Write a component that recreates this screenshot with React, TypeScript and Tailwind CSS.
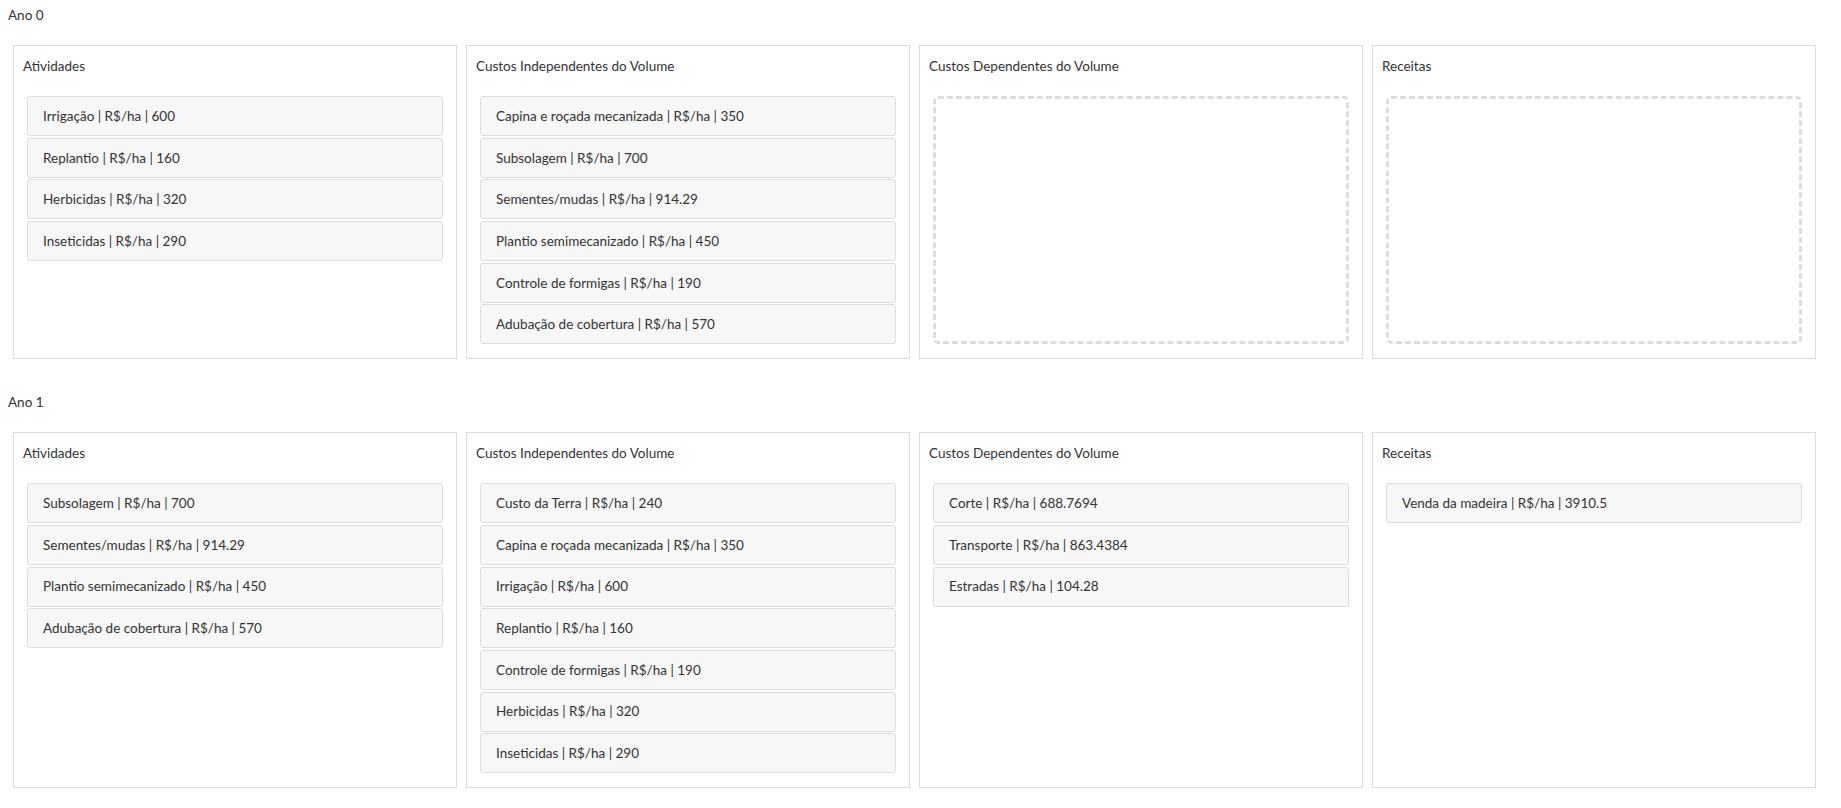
import React from 'react'

type Column = { title: string; items: string[] }
type Year = { label: string; columns: Column[] }

const YEARS: Year[] = [
  {
    label: 'Ano 0',
    columns: [
      { title: 'Atividades', items: ['Irrigação | R$/ha | 600', 'Replantio | R$/ha | 160', 'Herbicidas | R$/ha | 320', 'Inseticidas | R$/ha | 290'] },
      {
        title: 'Custos Independentes do Volume',
        items: [
          'Capina e roçada mecanizada | R$/ha | 350',
          'Subsolagem | R$/ha | 700',
          'Sementes/mudas | R$/ha | 914.29',
          'Plantio semimecanizado | R$/ha | 450',
          'Controle de formigas | R$/ha | 190',
          'Adubação de cobertura | R$/ha | 570',
        ],
      },
      { title: 'Custos Dependentes do Volume', items: [] },
      { title: 'Receitas', items: [] },
    ],
  },
  {
    label: 'Ano 1',
    columns: [
      { title: 'Atividades', items: ['Subsolagem | R$/ha | 700', 'Sementes/mudas | R$/ha | 914.29', 'Plantio semimecanizado | R$/ha | 450', 'Adubação de cobertura | R$/ha | 570'] },
      {
        title: 'Custos Independentes do Volume',
        items: [
          'Custo da Terra | R$/ha | 240',
          'Capina e roçada mecanizada | R$/ha | 350',
          'Irrigação | R$/ha | 600',
          'Replantio | R$/ha | 160',
          'Controle de formigas | R$/ha | 190',
          'Herbicidas | R$/ha | 320',
          'Inseticidas | R$/ha | 290',
        ],
      },
      { title: 'Custos Dependentes do Volume', items: ['Corte | R$/ha | 688.7694', 'Transporte | R$/ha | 863.4384', 'Estradas | R$/ha | 104.28'] },
      { title: 'Receitas', items: ['Venda da madeira | R$/ha | 3910.5'] },
    ],
  },
]

function Panel({ column }: { column: Column }) {
  return (
    <div className="flex flex-col border border-[#dddddd] bg-white pb-[14px]">
      <div className="pl-[9px] pt-[10px] h-[30px] leading-[20px]">{column.title}</div>
      <div className="flex-1 flex flex-col gap-[1.67px] px-[13px] mt-[20px]">
        {column.items.length === 0 ? (
          <div className="flex-1 rounded-[5px] border-[3px] border-dashed border-[#dddddd]" />
        ) : (
          column.items.map(item => (
            <div key={item} className="h-[40px] shrink-0 flex items-center pl-[15px] rounded-[3px] border border-[#dddddd] bg-[#f7f7f7]">
              {item}
            </div>
          ))
        )}
      </div>
    </div>
  )
}

export default function App() {
  return (
    <div className="min-h-screen bg-white pt-[5px] text-[13.5px] text-[#333333]" style={{ fontFamily: 'Lato, "Noto Sans", sans-serif' }}>
      {YEARS.map((year, i) => (
        <div key={year.label} className={i > 0 ? 'mt-[33px]' : ''}>
          <div className="pl-[8px] h-[20px] leading-[20px]">{year.label}</div>
          <div className="grid grid-cols-4 gap-[9px] pl-[13px] pr-[25px] mt-[20px]">
            {year.columns.map(col => (
              <Panel key={col.title} column={col} />
            ))}
          </div>
        </div>
      ))}
    </div>
  )
}
